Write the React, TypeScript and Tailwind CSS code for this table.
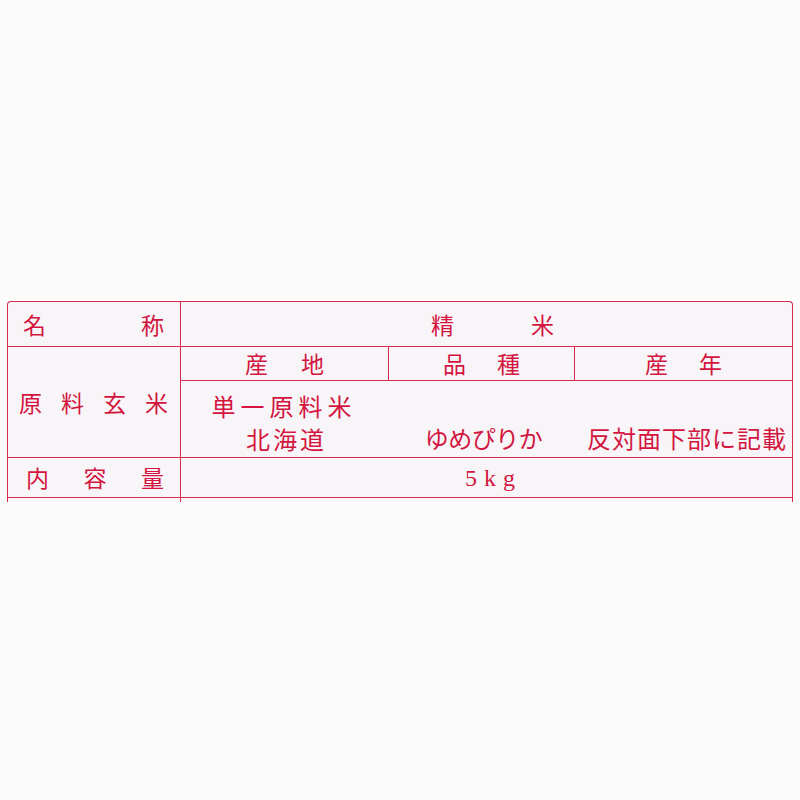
const jp = { fontFamily: '"Noto Sans CJK JP", "Noto Sans", sans-serif' };

export default function App() {
  return (
    <div className="min-h-[800px] bg-[#fcfbfc] pt-[301px] pl-[7px] pr-[7px] text-[#d3153f]" style={jp}>
      <div className="rounded-t-[4px] border-[1.5px] border-b-0 border-[#d9274f] bg-[#f7f5f7] text-[23px] leading-none">
        {/* 名称 */}
        <div className="flex h-[45px] border-b-[1.5px] border-[#d9274f]">
          <div className="flex w-[173px] shrink-0 items-center justify-between border-r-[1.5px] border-[#d9274f] pl-[15px] pr-[16px]">
            <span>名</span>
            <span>称</span>
          </div>
          <div className="flex flex-1 items-center gap-[77px] pl-[250px]">
            <span>精</span>
            <span>米</span>
          </div>
        </div>

        {/* 原料玄米 */}
        <div className="flex h-[111px] border-b-[1.5px] border-[#d9274f]">
          <div className="flex w-[173px] shrink-0 items-center justify-between border-r-[1.5px] border-[#d9274f] pl-[11px] pr-[12px]">
            <span>原</span>
            <span>料</span>
            <span>玄</span>
            <span>米</span>
          </div>
          <div className="flex flex-1 flex-col">
            <div className="grid h-[34px] grid-cols-[208px_186px_1fr] border-b-[1.5px] border-[#d9274f]">
              <div className="flex items-center justify-center gap-[33px] border-r-[1.5px] border-[#d9274f]">
                <span>産</span>
                <span>地</span>
              </div>
              <div className="flex items-center justify-center gap-[31px] border-r-[1.5px] border-[#d9274f]">
                <span>品</span>
                <span>種</span>
              </div>
              <div className="flex items-center justify-center gap-[31px]">
                <span>産</span>
                <span>年</span>
              </div>
            </div>
            <div className="grid flex-1 grid-cols-[208px_186px_1fr] pt-[8px] text-[24px] leading-[33px]">
              <div className="flex flex-col items-center">
                <span className="tracking-[5px] pr-[2px]">単一原料米</span>
                <span className="tracking-[3px] pl-[3px]">北海道</span>
              </div>
              <div className="flex flex-col items-center justify-end pb-[3px]">
                <span className="tracking-[-0.5px] pl-[3px]">ゆめぴりか</span>
              </div>
              <div className="flex flex-col items-center justify-end pb-[3px]">
                <span className="tracking-[1px] pl-[7px]">反対面下部に記載</span>
              </div>
            </div>
          </div>
        </div>

        {/* 内容量 */}
        <div className="flex h-[40px] border-b-[1.5px] border-[#d9274f]">
          <div className="flex w-[173px] shrink-0 items-center justify-between border-r-[1.5px] border-[#d9274f] pl-[18px] pr-[16px]">
            <span>内</span>
            <span>容</span>
            <span>量</span>
          </div>
          <div className="flex flex-1 items-center pl-[284px]">
            <span className="text-[24px] tracking-[7px]" style={{ fontFamily: '"Liberation Serif", serif' }}>
              5kg
            </span>
          </div>
        </div>

        <div className="flex h-[4px]">
          <div className="w-[173px] shrink-0 border-r-[1.5px] border-[#d9274f]" />
          <div className="flex-1" />
        </div>
      </div>
    </div>
  );
}
